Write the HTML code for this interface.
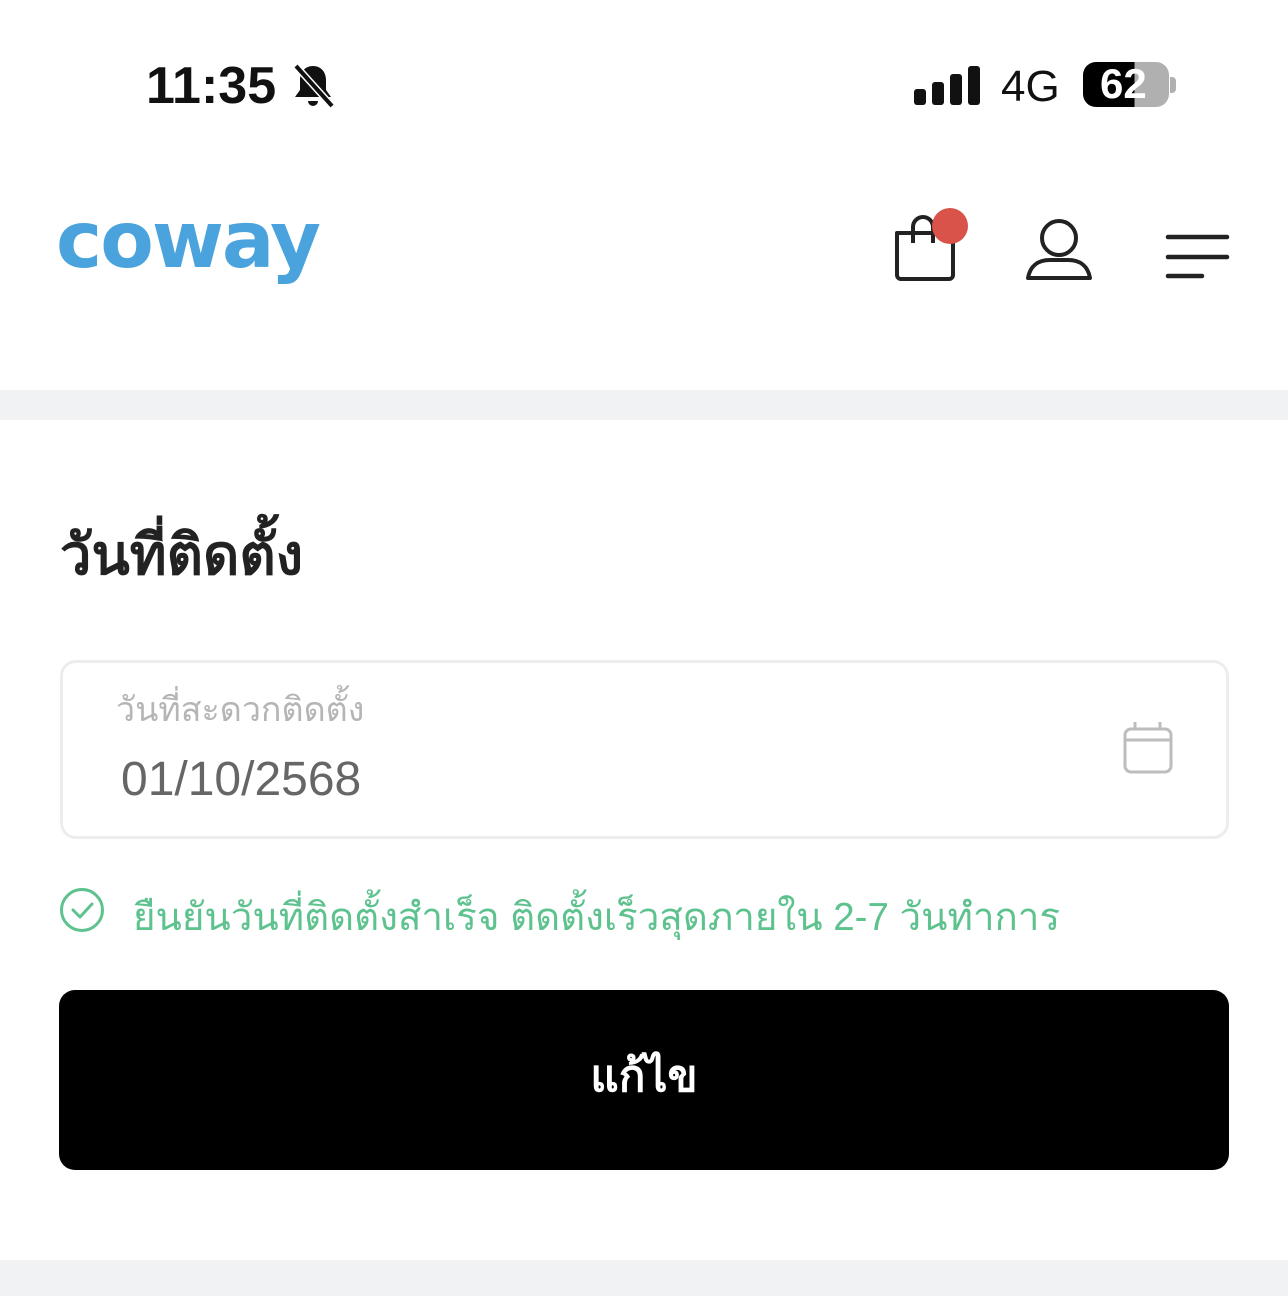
<!DOCTYPE html>
<html><head><meta charset="utf-8"><style>
*{margin:0;padding:0;box-sizing:border-box}
body{width:1288px;height:1296px;background:#fff;font-family:"Liberation Sans","DejaVu Sans",sans-serif;position:relative;overflow:hidden;color:#222}
.abs{position:absolute}
</style></head><body>
<div class="abs" style="left:146px;top:56px;font-size:52px;font-weight:bold;color:#111;letter-spacing:0">11:35</div>
<svg class="abs" style="left:290px;top:62px" width="46" height="48" viewBox="0 0 46 48"><path d="M23 4c-8 0-13 6-13 14v10l-5 7h36l-5-7V18c0-8-5-14-13-14z" fill="#111"/><path d="M18 39a5 5 0 0 0 10 0z" fill="#111"/><line x1="6" y1="4" x2="42" y2="44" stroke="#fff" stroke-width="7"/><line x1="6" y1="4" x2="42" y2="44" stroke="#111" stroke-width="4"/></svg>
<svg class="abs" style="left:914px;top:64px" width="68" height="42"><rect x="0" y="25" width="12" height="16" rx="3" fill="#111"/><rect x="18" y="18" width="12" height="23" rx="3" fill="#111"/><rect x="36" y="10" width="12" height="31" rx="3" fill="#111"/><rect x="54" y="2" width="12" height="39" rx="3" fill="#111"/></svg>
<div class="abs" style="left:1001px;top:62px;font-size:44px;color:#111">4G</div>
<div class="abs" style="left:1083px;top:62px;width:86px;height:45px;border-radius:13px;background:linear-gradient(90deg,#000 60%,#b0b0b0 60%)"></div>
<div class="abs" style="left:1170px;top:77px;width:6px;height:16px;border-radius:0 4px 4px 0;background:#b0b0b0"></div>
<div class="abs" style="left:1100px;top:60px;font-size:42px;font-weight:bold;color:#fff">62</div>
<div class="abs" style="left:56px;top:196px;font-size:78px;font-weight:bold;color:#4aa3dd;letter-spacing:-2px;font-family:'DejaVu Sans',sans-serif">coway</div>
<svg class="abs" style="left:890px;top:205px" width="90" height="80"><path d="M7 28h52a4 4 0 0 1 4 4v38a4 4 0 0 1-4 4H11a4 4 0 0 1-4-4z" fill="none" stroke="#222" stroke-width="4" stroke-linejoin="round"/><path d="M23 38V22a10 10 0 0 1 20 0v16" fill="none" stroke="#222" stroke-width="4"/><circle cx="60" cy="21" r="18" fill="#d9534b"/></svg>
<svg class="abs" style="left:1022px;top:212px" width="74" height="72"><circle cx="37" cy="26" r="17" fill="none" stroke="#222" stroke-width="4"/><path d="M6 66c2-12 10-18 22-18h18c12 0 20 6 22 18z" fill="none" stroke="#222" stroke-width="4" stroke-linejoin="round"/></svg>
<svg class="abs" style="left:1164px;top:230px" width="68" height="52" stroke="#222" stroke-width="4.5" stroke-linecap="round"><line x1="4" y1="7" x2="63" y2="7"/><line x1="4" y1="27" x2="63" y2="27"/><line x1="4" y1="46" x2="38" y2="46"/></svg>
<div class="abs" style="left:0;top:390px;width:1288px;height:30px;background:#f1f2f4"></div>
<div class="abs" style="left:60px;top:510px;font-size:56px;font-weight:bold;color:#222">วันที่ติดตั้ง</div>
<div class="abs" style="left:60px;top:660px;width:1169px;height:179px;border:3px solid #ededed;border-radius:16px"></div>
<div class="abs" style="left:116px;top:682px;font-size:34px;color:#b5b5b5">วันที่สะดวกติดตั้ง</div>
<div class="abs" style="left:121px;top:752px;font-size:48px;color:#666">01/10/2568</div>
<svg class="abs" style="left:1122px;top:720px" width="52" height="56" fill="none" stroke="#bdbdbd" stroke-width="3"><rect x="3" y="9" width="46" height="43" rx="6"/><line x1="3" y1="20" x2="49" y2="20"/><line x1="13" y1="2" x2="13" y2="10"/><line x1="38" y1="2" x2="38" y2="10"/></svg>
<svg class="abs" style="left:59px;top:887px" width="46" height="46" fill="none" stroke="#5dc28e" stroke-width="3"><circle cx="23" cy="23" r="20.5"/><path d="M14 23l7 7 12-13" stroke-linecap="round" stroke-linejoin="round"/></svg>
<div class="abs" style="left:133px;top:886px;font-size:38.5px;color:#5dc28e">ยืนยันวันที่ติดตั้งสำเร็จ ติดตั้งเร็วสุดภายใน 2-7 วันทำการ</div>
<div class="abs" style="left:59px;top:990px;width:1170px;height:180px;background:#000;border-radius:16px;color:#fff;font-size:44px;font-weight:bold;display:flex;align-items:center;justify-content:center;padding-bottom:8px">แก้ไข</div>
<div class="abs" style="left:0;top:1260px;width:1288px;height:36px;background:#f1f2f4"></div>
</body></html>
